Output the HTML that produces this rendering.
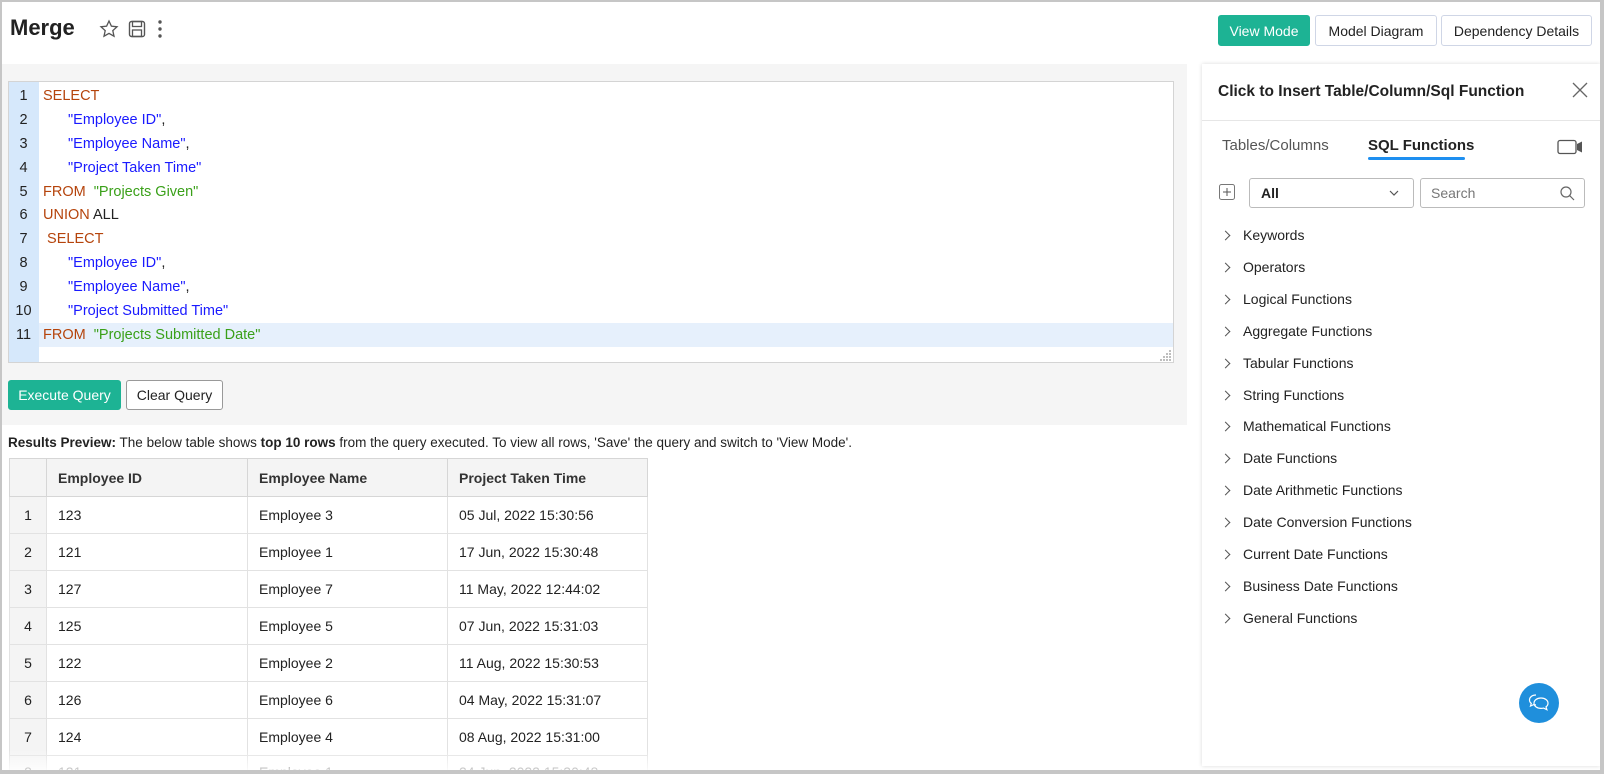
<!DOCTYPE html>
<html><head><meta charset="utf-8"><style>
*{box-sizing:border-box;margin:0;padding:0}
body{width:1604px;height:774px;overflow:hidden;background:#fff;font-family:"Liberation Sans",sans-serif;color:#222;position:relative}
.clip{position:absolute;left:0;top:0;width:1604px;height:771px;overflow:hidden}
.frame{position:absolute;left:0;top:0;width:1604px;height:774px;border:2px solid #c6c6c6;border-right-width:4px;border-bottom-width:4px}
.abs{position:absolute}
.btn{position:absolute;border:1px solid #cfd6e6;border-radius:3px;background:#fff;font-size:14px;display:flex;align-items:center;justify-content:center;color:#222}
.green{background:#1db394;border-color:#1db394;color:#fff}
.code{position:absolute;left:43px;font-size:14.5px;white-space:pre}
.ln{position:absolute;left:8px;width:31px;text-align:center;font-size:14.5px;color:#222}
.k{color:#b5440c}.s{color:#1a1aff}.g{color:#3aa019}
.ind{display:inline-block;width:25px}
table{border-collapse:collapse;font-size:14px}
td{border:1px solid #e2e2e2;height:37px;padding-left:11px}
th{border:1px solid #d6d6d6;background:#f4f4f4;height:38px;text-align:left;padding-left:11px;font-weight:normal;color:#333}
.item{position:absolute;left:1218px;font-size:14px;color:#222}
.item:before{content:"";position:absolute;left:4px;top:5px;width:6px;height:6px;border-right:1.5px solid #555;border-top:1.5px solid #555;transform:rotate(45deg)}
.item span{position:absolute;left:25px;white-space:nowrap}
</style></head><body>
<div class="clip">
<div class="abs" style="left:10px;top:15px;font-size:22px;font-weight:bold;color:#222">Merge</div>
<svg class="abs" style="left:99px;top:19px" width="20" height="20" viewBox="0 0 20 20"><path d="M10 2l2.4 5.2 5.6.6-4.2 3.8 1.2 5.6L10 14.4 5 17.2l1.2-5.6L2 7.8l5.6-.6z" fill="none" stroke="#555" stroke-width="1.3"/></svg>
<svg class="abs" style="left:128px;top:20px" width="18" height="18" viewBox="0 0 18 18"><rect x="1.5" y="1.5" width="15" height="15" rx="2" fill="none" stroke="#555" stroke-width="1.4"/><rect x="4.5" y="1.5" width="9" height="5" fill="none" stroke="#555" stroke-width="1.3"/><rect x="4.5" y="10" width="9" height="6.5" fill="none" stroke="#555" stroke-width="1.3"/></svg>
<svg class="abs" style="left:156px;top:19px" width="8" height="20"><circle cx="4" cy="3" r="1.7" fill="#555"/><circle cx="4" cy="10" r="1.7" fill="#555"/><circle cx="4" cy="17" r="1.7" fill="#555"/></svg>

<div class="btn green" style="left:1218px;top:15px;width:92px;height:31px">View Mode</div>
<div class="btn" style="left:1315px;top:15px;width:122px;height:31px">Model Diagram</div>
<div class="btn" style="left:1441px;top:15px;width:151px;height:31px">Dependency Details</div>

<div class="abs" style="left:2px;top:64px;width:1185px;height:361px;background:#f5f5f5"></div>
<div class="abs" style="left:8px;top:81px;width:1166px;height:282px;background:#fff;border:1px solid #d4d4d4"></div>
<div class="abs" style="left:9px;top:82px;width:30px;height:280px;background:#d6e8fb"></div>
<div class="abs" style="left:39px;top:323px;width:1134px;height:24px;background:#e6f0fc"></div>
<svg class="abs" style="left:1160px;top:349px" width="12" height="12"><g fill="#aaa"><circle cx="10" cy="2" r="1"/><circle cx="7" cy="5" r="1"/><circle cx="10" cy="5" r="1"/><circle cx="4" cy="8" r="1"/><circle cx="7" cy="8" r="1"/><circle cx="10" cy="8" r="1"/><circle cx="1" cy="11" r="1"/><circle cx="4" cy="11" r="1"/><circle cx="7" cy="11" r="1"/><circle cx="10" cy="11" r="1"/></g></svg>

<div class="ln" style="top:88px">1</div><div class="code k" style="top:88px">SELECT</div>
<div class="ln" style="top:112px">2</div><div class="code" style="top:112px"><span class="ind"></span><span class="s">"Employee ID"</span>,</div>
<div class="ln" style="top:136px">3</div><div class="code" style="top:136px"><span class="ind"></span><span class="s">"Employee Name"</span>,</div>
<div class="ln" style="top:160px">4</div><div class="code" style="top:160px"><span class="ind"></span><span class="s">"Project Taken Time"</span></div>
<div class="ln" style="top:184px">5</div><div class="code" style="top:184px"><span class="k">FROM</span>  <span class="g">"Projects Given"</span></div>
<div class="ln" style="top:207px">6</div><div class="code" style="top:207px"><span class="k">UNION</span> ALL</div>
<div class="ln" style="top:231px">7</div><div class="code" style="top:231px"> <span class="k">SELECT</span></div>
<div class="ln" style="top:255px">8</div><div class="code" style="top:255px"><span class="ind"></span><span class="s">"Employee ID"</span>,</div>
<div class="ln" style="top:279px">9</div><div class="code" style="top:279px"><span class="ind"></span><span class="s">"Employee Name"</span>,</div>
<div class="ln" style="top:303px">10</div><div class="code" style="top:303px"><span class="ind"></span><span class="s">"Project Submitted Time"</span></div>
<div class="ln" style="top:327px">11</div><div class="code" style="top:327px"><span class="k">FROM</span>  <span class="g">"Projects Submitted Date"</span></div>

<div class="btn green" style="left:8px;top:380px;width:113px;height:30px">Execute Query</div>
<div class="btn" style="left:126px;top:380px;width:97px;height:30px;border-color:#999">Clear Query</div>

<div class="abs" style="left:8px;top:435px;font-size:13.5px;white-space:nowrap"><b>Results Preview:</b> The below table shows <b>top 10 rows</b> from the query executed. To view all rows, 'Save' the query and switch to 'View Mode'.</div>

<table class="abs" style="left:9px;top:458px;width:639px">
<tr><th style="width:37px"></th><th style="width:201px;font-weight:bold">Employee ID</th><th style="width:200px;font-weight:bold">Employee Name</th><th style="font-weight:bold">Project Taken Time</th></tr>
<tr><td style="background:#f4f4f4;padding-left:0;text-align:center">1</td><td>123</td><td>Employee 3</td><td>05 Jul, 2022 15:30:56</td></tr>
<tr><td style="background:#f4f4f4;padding-left:0;text-align:center">2</td><td>121</td><td>Employee 1</td><td>17 Jun, 2022 15:30:48</td></tr>
<tr><td style="background:#f4f4f4;padding-left:0;text-align:center">3</td><td>127</td><td>Employee 7</td><td>11 May, 2022 12:44:02</td></tr>
<tr><td style="background:#f4f4f4;padding-left:0;text-align:center">4</td><td>125</td><td>Employee 5</td><td>07 Jun, 2022 15:31:03</td></tr>
<tr><td style="background:#f4f4f4;padding-left:0;text-align:center">5</td><td>122</td><td>Employee 2</td><td>11 Aug, 2022 15:30:53</td></tr>
<tr><td style="background:#f4f4f4;padding-left:0;text-align:center">6</td><td>126</td><td>Employee 6</td><td>04 May, 2022 15:31:07</td></tr>
<tr><td style="background:#f4f4f4;padding-left:0;text-align:center">7</td><td>124</td><td>Employee 4</td><td>08 Aug, 2022 15:31:00</td></tr>
<tr><td style="background:#f4f4f4;padding-left:0;text-align:center;vertical-align:top;padding-top:8px">8</td><td style="vertical-align:top;padding-top:8px">121</td><td style="vertical-align:top;padding-top:8px">Employee 1</td><td style="vertical-align:top;padding-top:8px">24 Jun, 2022 15:30:48</td></tr>
</table>
<div class="abs" style="left:2px;top:750px;width:1598px;height:21px;background:linear-gradient(rgba(255,255,255,0),rgba(255,255,255,0.85))"></div>

<div class="abs" style="left:1202px;top:64px;width:398px;height:702px;background:#fff;box-shadow:0 0 4px rgba(0,0,0,0.15)"></div>
<div class="abs" style="left:1218px;top:83px;font-size:15.5px;font-weight:bold;color:#222">Click to Insert Table/Column/Sql Function</div>
<svg class="abs" style="left:1571px;top:81px" width="18" height="18"><path d="M2 2L16 16M16 2L2 16" stroke="#666" stroke-width="1.3"/></svg>
<div class="abs" style="left:1202px;top:120px;width:398px;height:1px;background:#e6e6e6"></div>
<div class="abs" style="left:1222px;top:137px;font-size:15px;color:#555">Tables/Columns</div>
<div class="abs" style="left:1368px;top:137px;font-size:15px;font-weight:bold;color:#222">SQL Functions</div>
<div class="abs" style="left:1368px;top:157px;width:97px;height:3px;background:#1e8ff0;border-radius:2px"></div>
<svg class="abs" style="left:1557px;top:139px" width="26" height="16"><rect x="1" y="1.5" width="18" height="13" rx="2" fill="none" stroke="#555" stroke-width="1.3"/><path d="M20 5l5-2.5v11L20 11z" fill="#555"/></svg>
<svg class="abs" style="left:1219px;top:184px" width="16" height="16"><rect x="0.5" y="0.5" width="15" height="15" rx="2" fill="none" stroke="#777"/><path d="M8 4v8M4 8h8" stroke="#555"/></svg>
<div class="abs" style="left:1249px;top:178px;width:165px;height:30px;border:1px solid #bbb;border-radius:3px"></div>
<div class="abs" style="left:1261px;top:185px;font-size:14px;font-weight:bold">All</div>
<svg class="abs" style="left:1389px;top:189px" width="10" height="8"><path d="M1 2l4 4 4-4" fill="none" stroke="#555" stroke-width="1.2"/></svg>
<div class="abs" style="left:1420px;top:178px;width:165px;height:30px;border:1px solid #bbb;border-radius:3px"></div>
<div class="abs" style="left:1431px;top:185px;font-size:14px;color:#777">Search</div>
<svg class="abs" style="left:1560px;top:186px" width="15" height="15"><circle cx="6" cy="6" r="5" fill="none" stroke="#666" stroke-width="1.2"/><path d="M9.6 9.6L14 14" stroke="#666" stroke-width="1.2"/></svg>

<div class="item" style="top:227px"><span>Keywords</span></div>
<div class="item" style="top:259px"><span>Operators</span></div>
<div class="item" style="top:291px"><span>Logical Functions</span></div>
<div class="item" style="top:323px"><span>Aggregate Functions</span></div>
<div class="item" style="top:355px"><span>Tabular Functions</span></div>
<div class="item" style="top:387px"><span>String Functions</span></div>
<div class="item" style="top:418px"><span>Mathematical Functions</span></div>
<div class="item" style="top:450px"><span>Date Functions</span></div>
<div class="item" style="top:482px"><span>Date Arithmetic Functions</span></div>
<div class="item" style="top:514px"><span>Date Conversion Functions</span></div>
<div class="item" style="top:546px"><span>Current Date Functions</span></div>
<div class="item" style="top:578px"><span>Business Date Functions</span></div>
<div class="item" style="top:610px"><span>General Functions</span></div>

<div class="abs" style="left:1519px;top:683px;width:40px;height:40px;border-radius:50%;background:#1f8fdc"></div>
<svg class="abs" style="left:1527px;top:692px" width="24" height="22"><path d="M9 3c-4 0-6.5 2.3-6.5 5 0 1.4.7 2.6 1.8 3.4L3.5 14l3.2-1.4c.7.2 1.5.3 2.3.3" fill="none" stroke="#fff" stroke-width="1.2"/><path d="M14 6c4 0 7 2.3 7 5.2 0 1.5-.8 2.8-2 3.7l.9 2.8-3.3-1.6c-.8.2-1.7.3-2.6.3-4 0-7-2.3-7-5.2S10 6 14 6z" fill="none" stroke="#fff" stroke-width="1.2"/></svg>
</div>
<div class="frame"></div>
</body></html>
